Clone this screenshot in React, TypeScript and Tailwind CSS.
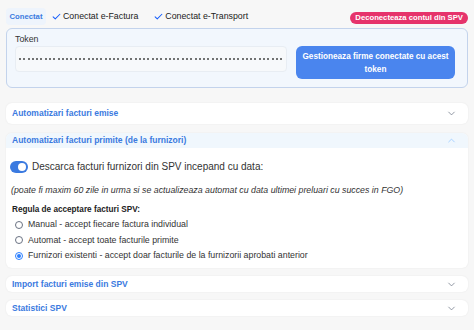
import * as React from "react";

const font = { fontFamily: "'Liberation Sans', Arial, sans-serif" };

function Check() {
  return (
    <svg viewBox="0 0 16 16" className="size-[9px] text-blue-600" fill="none" stroke="currentColor" strokeWidth="1.8">
      <path d="M2 8.5l3.8 3.8L14 4" strokeLinecap="round" strokeLinejoin="round" />
    </svg>
  );
}

function Chevron({ up }: { up?: boolean }) {
  return (
    <svg viewBox="0 0 16 16" className={`size-[9px] ${up ? "text-blue-300" : "text-gray-500"}`} fill="none" stroke="currentColor" strokeWidth="1.3">
      <path d={up ? "M3 10.5l5-5 5 5" : "M3 5.5l5 5 5-5"} strokeLinecap="round" strokeLinejoin="round" />
    </svg>
  );
}

function Section({ title, tall }: { title: string; tall?: boolean }) {
  return (
    <div
      className={`flex ${tall ? "h-[21px]" : "h-[16px]"} items-center justify-between rounded-md bg-white pl-[6px] pr-[12px] shadow-[0_0_2px_rgba(0,0,0,0.07)]`}
    >
      <span className="text-[8.5px] font-bold leading-none text-[#3b7ae0]">{title}</span>
      <Chevron />
    </div>
  );
}

function Radio({ checked, label }: { checked?: boolean; label: string }) {
  return (
    <label className="flex h-[11px] items-center gap-[5px] text-[8.8px] leading-none text-[#333]">
      <span
        className={`flex size-[8px] items-center justify-center rounded-full border ${
          checked ? "border-blue-500" : "border-gray-500"
        } bg-white`}
      >
        {checked && <span className="size-[4px] rounded-full bg-blue-500" />}
      </span>
      {label}
    </label>
  );
}

export default function App() {
  const dots = Array.from({ length: 62 });
  return (
    <div className="h-[330px] w-[474px] overflow-hidden bg-[#f7f7f7] px-[6px] pt-[8px] text-[#222]" style={font}>
      {/* status row */}
      <div className="flex h-[17px] items-center">
        <span className="flex h-[17px] w-[40px] items-center justify-center rounded-sm bg-[#eef4fc] text-[7.7px] font-bold text-[#3b7ae0]">
          Conectat
        </span>
        <span className="ml-[6px] flex items-center gap-[2px] text-[8.8px] text-[#222]">
          <Check />
          Conectat e-Factura
        </span>
        <span className="ml-[16px] flex items-center gap-[2px] text-[8.8px] text-[#222]">
          <Check />
          Conectat e-Transport
        </span>
        <span className="ml-auto mt-[2px] flex h-[12px] items-center rounded-full bg-[#e6336b] px-[5px] text-[7.7px] font-bold text-white">
          Deconecteaza contul din SPV
        </span>
      </div>

      {/* token */}
      <div className="mt-[3px] h-[60px] rounded-md border border-[#c3d3ec] bg-[#f2f7fd] pl-[8px] pr-[12px] pt-[5px]">
        <div className="h-[10px] text-[8.8px] leading-[10px] text-[#333]">Token</div>
        <div className="mt-[2px] flex items-start gap-[9px]">
          <div className="flex h-[26px] flex-1 items-center justify-between rounded border border-[#e8edf3] bg-[#f7f9fb] px-[3px]">
            {dots.map((_, i) => (
              <span key={i} className="size-[2px] rounded-full bg-[#444]" />
            ))}
          </div>
          <button className="h-[33px] w-[159px] rounded-md bg-[#4a85ee] px-[5px] text-[8.2px] font-bold leading-[13px] text-white">
            Gestioneaza firme conectate cu acest token
          </button>
        </div>
      </div>

      <div className="mt-[15px]">
        <Section tall title="Automatizari facturi emise" />
      </div>

      {/* expanded */}
      <div className="mt-[9px] overflow-hidden rounded-md bg-white shadow-[0_0_2px_rgba(0,0,0,0.07)]">
        <div className="flex h-[15px] items-center justify-between bg-[#f0f7fd] pl-[6px] pr-[12px]">
          <span className="text-[8.5px] font-bold leading-none text-[#3b7ae0]">
            Automatizari facturi primite (de la furnizori)
          </span>
          <Chevron up />
        </div>
        <div className="h-[120px] px-[4px] pt-[13px]">
          <div className="flex h-[12px] items-center gap-[4px] text-[10px] leading-none text-[#333]">
            <span className="flex h-[12px] w-[18px] items-center justify-end rounded-full bg-[#3b7ae0] px-[2px]">
              <span className="size-[8px] rounded-full bg-white" />
            </span>
            Descarca facturi furnizori din SPV incepand cu data:
          </div>
          <div className="ml-[1px] mt-[12px] h-[10px] text-[8.8px] italic leading-[10px] text-[#333]">
            (poate fi maxim 60 zile in urma si se actualizeaza automat cu data ultimei preluari cu succes in FGO)
          </div>
          <div className="ml-[2px] mt-[10px] h-[10px] text-[8.2px] font-bold leading-[10px] text-[#222]">
            Regula de acceptare facturi SPV:
          </div>
          <div className="ml-[5px] mt-[4px] flex flex-col gap-[4.5px]">
            <Radio label="Manual - accept fiecare factura individual" />
            <Radio label="Automat - accept toate facturile primite" />
            <Radio checked label="Furnizori existenti - accept doar facturile de la furnizorii aprobati anterior" />
          </div>
        </div>
      </div>

      <div className="mt-[8px]">
        <Section title="Import facturi emise din SPV" />
      </div>
      <div className="mt-[8px]">
        <Section title="Statistici SPV" />
      </div>
    </div>
  );
}
